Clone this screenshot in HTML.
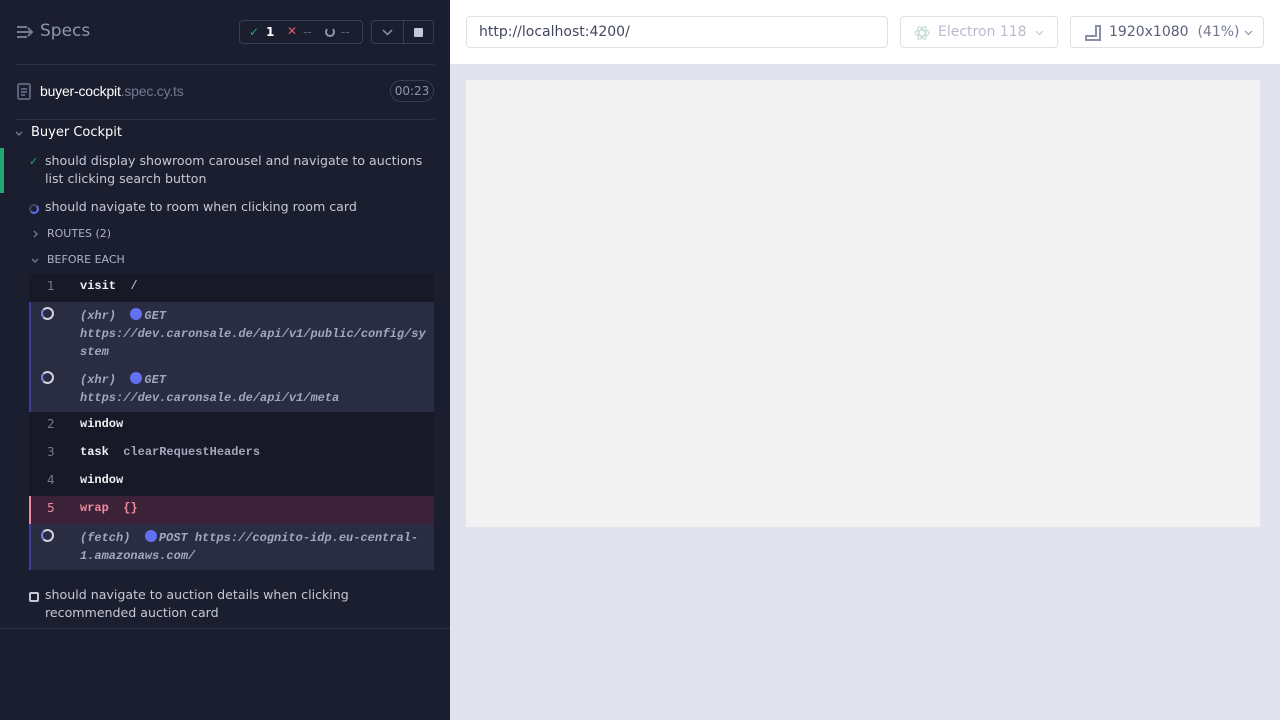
<!DOCTYPE html>
<html><head><style>
*{box-sizing:border-box;margin:0;padding:0}
body{width:1280px;height:720px;overflow:hidden;font-family:"DejaVu Sans","Liberation Sans",sans-serif;background:#e1e3ed;position:relative}
.side{position:absolute;left:0;top:0;width:450px;height:720px;background:#1b1e2e;color:#d0d2e0}
.a{position:absolute}
.mono{font-family:"Liberation Mono","DejaVu Sans Mono",monospace;font-size:12px;font-weight:bold}
.hr{position:absolute;left:16px;width:418px;height:1px;background:#2e3247}
.row{position:absolute;left:29px;width:405px}
.num{position:absolute;left:18px;color:#747994;font-size:12px;font-weight:normal;font-family:"DejaVu Sans",sans-serif}
.cmd{position:absolute;left:51px;color:#f0f1f5}
.pend{background:#2a2d42;border-left:2px solid #3c3f9c}
.spin{position:absolute;left:10px;width:13px;height:13px;border-radius:50%;border:2px solid #d0d2e0;border-left-color:#7a7fe0}
.it{font-style:italic;color:#a3a7bd;line-height:18px;overflow-wrap:anywhere}
.dot{display:inline-block;width:12px;height:12px;border-radius:50%;background:#6470f3;vertical-align:-1px;margin-right:2px}
.t{font-size:12.6px;line-height:18px;color:#c5c8d8}
</style></head><body>
<div class="side">
 <svg class="a" style="left:16px;top:25px" width="18" height="14" viewBox="0 0 18 14" fill="none" stroke="#747994" stroke-width="2"><path d="M1 2h10M1 7h14M1 12h10M12 3l4 4-4 4"/></svg>
 <div class="a" style="left:40px;top:21px;color:#9095ad;font-size:17px">Specs</div>
 <div class="a" style="left:239px;top:20px;width:124px;height:24px;border:1px solid #3a3e55;border-radius:4px;font-size:12px">
  <span class="a" style="left:9px;top:4px;color:#1fa971">&#10003;</span>
  <span class="a" style="left:26px;top:4px;color:#fff;font-weight:bold">1</span>
  <span class="a" style="left:47px;top:3px;color:#e45770">&#10005;</span>
  <span class="a" style="left:63px;top:4px;color:#5a5f7a">--</span>
  <span class="a" style="left:85px;top:6px;width:10px;height:10px;border:2px solid #9095ad;border-radius:50%;border-top-color:transparent"></span>
  <span class="a" style="left:101px;top:4px;color:#5a5f7a">--</span>
 </div>
 <div class="a" style="left:371px;top:20px;width:63px;height:24px;border:1px solid #3a3e55;border-radius:4px">
  <span class="a" style="left:31px;top:0;width:1px;height:22px;background:#3a3e55"></span>
  <svg class="a" style="left:10px;top:8px" width="11" height="7" viewBox="0 0 11 7" fill="none" stroke="#9095ad" stroke-width="1.5"><path d="M1 1l4.5 4.5L10 1"/></svg>
  <span class="a" style="left:42px;top:7px;width:9px;height:9px;background:#c5c8d8;border-radius:1px"></span>
 </div>
 <div class="hr" style="top:64px"></div>
 <svg class="a" style="left:17px;top:83px" width="14" height="17" viewBox="0 0 14 17" fill="none" stroke="#5a5f7a" stroke-width="2"><rect x="1" y="1" width="12" height="15" rx="1.5"/><path d="M4 6h6M4 9h6M4 12h4"/></svg>
 <div class="a" style="left:40px;top:83px;font-size:14px;font-family:'Liberation Sans',sans-serif;color:#fff;letter-spacing:-0.2px">buyer-cockpit<span style="color:#747994">.spec.cy.ts</span></div>
 <div class="a" style="left:390px;top:80px;width:44px;height:22px;border:1px solid #3a3e55;border-radius:11px;color:#9095ad;font-size:12px;text-align:center;line-height:20px">00:23</div>
 <div class="hr" style="top:119px"></div>
 <svg class="a" style="left:15px;top:131px" width="8" height="5" viewBox="0 0 8 5" fill="none" stroke="#747994" stroke-width="1.3"><path d="M1 1l3 3 3-3"/></svg>
 <div class="a" style="left:31px;top:125px;color:#fff;font-size:13px">Buyer Cockpit</div>
 <div class="a" style="left:0;top:148px;width:4px;height:45px;background:#1fa971"></div>
 <div class="a" style="left:29px;top:155px;color:#1fa971;font-size:11px">&#10003;</div>
 <div class="a t" style="left:45px;top:152px;width:390px">should display showroom carousel and navigate to auctions list clicking search button</div>
 <div class="a" style="left:29px;top:204px;width:10px;height:10px;border-radius:50%;border:2px solid #434861;border-bottom-color:#6470f3;border-right-color:#6470f3"></div>
 <div class="a t" style="left:45px;top:198px">should navigate to room when clicking room card</div>
 <svg class="a" style="left:33px;top:230px" width="5" height="8" viewBox="0 0 5 8" fill="none" stroke="#747994" stroke-width="1.3"><path d="M1 1l3 3-3 3"/></svg>
 <div class="a" style="left:47px;top:227px;color:#b0b3c8;font-size:11px">ROUTES (2)</div>
 <svg class="a" style="left:31px;top:258px" width="8" height="5" viewBox="0 0 8 5" fill="none" stroke="#747994" stroke-width="1.3"><path d="M1 1l3 3 3-3"/></svg>
 <div class="a" style="left:47px;top:253px;color:#b0b3c8;font-size:11px">BEFORE EACH</div>
 <div class="row mono" style="top:274px;height:28px;background:#171926"><span class="num" style="top:5px">1</span><span class="cmd" style="top:5px">visit <span style="color:#c5c8d8;font-weight:normal">&nbsp;/</span></span></div>
 <div class="row mono pend" style="top:302px;height:110px">
  <span class="spin" style="top:5px"></span>
  <div class="a it" style="left:49px;top:5px;width:352px">(xhr) &nbsp;<span class="dot"></span>GET https://dev.caronsale.de/api/v1/public/config/system</div>
  <span class="spin" style="top:69px"></span>
  <div class="a it" style="left:49px;top:69px;width:352px">(xhr) &nbsp;<span class="dot"></span>GET https://dev.caronsale.de/api/v1/meta</div>
 </div>
 <div class="row mono" style="top:412px;height:84px;background:#171926">
  <span class="num" style="top:5px">2</span><span class="cmd" style="top:5px">window</span>
  <span class="num" style="top:33px">3</span><span class="cmd" style="top:33px">task <span style="color:#a3a7bd">&nbsp;clearRequestHeaders</span></span>
  <span class="num" style="top:61px">4</span><span class="cmd" style="top:61px">window</span>
 </div>
 <div class="row mono" style="top:496px;height:28px;background:#3c2238;border-left:2px solid #f08a9b"><span class="num" style="top:5px;left:16px;color:#f08a9b">5</span><span class="cmd" style="top:5px;left:49px;color:#f08a9b">wrap <span>&nbsp;{}</span></span></div>
 <div class="row mono pend" style="top:524px;height:46px">
  <span class="spin" style="top:5px"></span>
  <div class="a it" style="left:49px;top:5px;width:352px">(fetch) &nbsp;<span class="dot"></span>POST https://cognito-idp.eu-central-1.amazonaws.com/</div>
 </div>
 <div class="a" style="left:29px;top:592px;width:10px;height:10px;border:2px solid #c5c8d8;border-radius:2px"></div>
 <div class="a t" style="left:45px;top:586px;width:385px">should navigate to auction details when clicking recommended auction card</div>
 <div class="a" style="left:0;top:628px;width:450px;height:1px;background:#2e3247"></div>
</div>
<div class="a" style="left:450px;top:0;width:830px;height:64px;background:#fff"></div>
<div class="a" style="left:466px;top:16px;width:422px;height:32px;border:1px solid #dfe1ea;border-radius:4px;font-size:14px;color:#434861;padding:7px 12px">http://localhost:4200/</div>
<div class="a" style="left:900px;top:16px;width:158px;height:32px;border:1px solid #dfe1ea;border-radius:4px;font-size:14px;color:#b8bbcc;padding:7px 0 0 37px">Electron 118
 <svg class="a" style="left:134px;top:13px" width="9" height="6" viewBox="0 0 9 6" fill="none" stroke="#c5c8d8" stroke-width="1.2"><path d="M1 1l3.5 3.5L8 1"/></svg>
 <svg class="a" style="left:13px;top:8px" width="16" height="16" viewBox="0 0 16 16" fill="none" stroke="#c8ddd8" stroke-width="1.2"><ellipse cx="8" cy="8" rx="7" ry="3"/><ellipse cx="8" cy="8" rx="7" ry="3" transform="rotate(60 8 8)"/><ellipse cx="8" cy="8" rx="7" ry="3" transform="rotate(120 8 8)"/></svg></div>
<div class="a" style="left:1070px;top:16px;width:194px;height:32px;border:1px solid #dfe1ea;border-radius:4px;font-size:14px;color:#5a5f7a;padding:7px 0 0 38px">1920x1080 &nbsp;<span style="color:#747994">(41%)</span>
 <svg class="a" style="left:173px;top:13px" width="9" height="6" viewBox="0 0 9 6" fill="none" stroke="#9095ad" stroke-width="1.2"><path d="M1 1l3.5 3.5L8 1"/></svg>
 <svg class="a" style="left:14px;top:8px" width="16" height="16" viewBox="0 0 16 16" fill="none" stroke="#8a8fa8" stroke-width="2"><path d="M1 15h14V1h-4v10H1z"/></svg></div>
<div class="a" style="left:466px;top:80px;width:794px;height:447px;background:#f2f2f2"></div>
</body></html>
